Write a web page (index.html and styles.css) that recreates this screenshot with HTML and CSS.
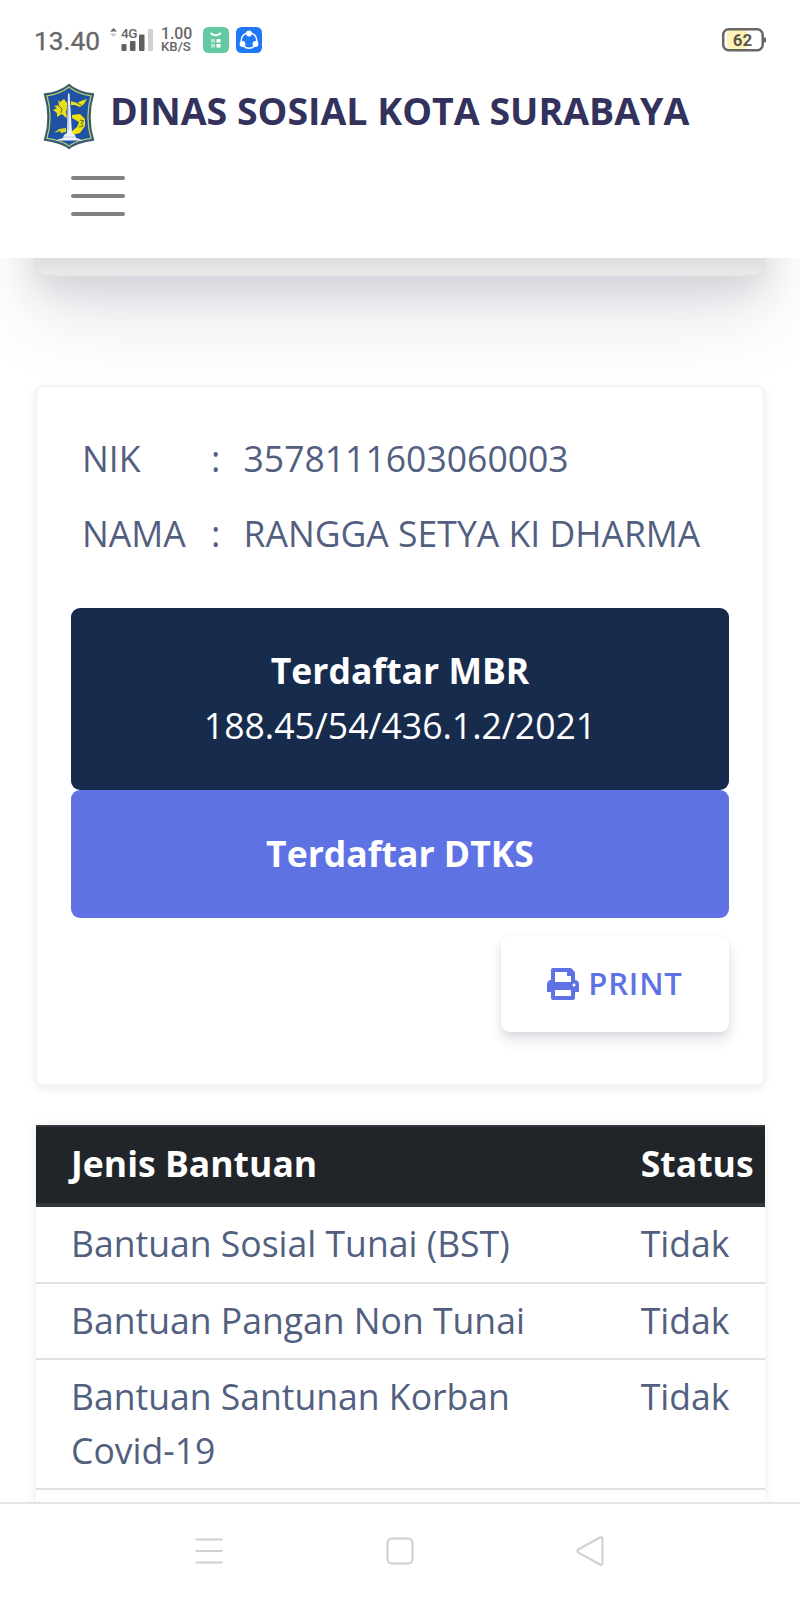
FILE: index.html
```html
<!DOCTYPE html>
<html lang="id">
<head>
<meta charset="utf-8">
<title>Dinas Sosial Kota Surabaya</title>
<link rel="stylesheet" href="styles.css">
</head>
<body>
<div class="screen">
  <header class="header">
    <div class="status-bar">
      <span class="clock">13.40</span>
      <svg class="signal" width="46" height="28" viewBox="0 0 46 28">
        <path d="M0 6.500L3.500 3L7 6.500Z" fill="#666"/><path d="M0 8.500L3.500 12L7 8.500Z" fill="#c8c8c8"/>
        <text x="11" y="12.500" class="net-label">4G</text>
        <rect x="11.500" y="19" width="5" height="7" rx="1" fill="#606060"/>
        <rect x="20" y="16" width="5.500" height="10" rx="1" fill="#606060"/>
        <rect x="29" y="9.500" width="5.500" height="16.500" rx="1" fill="#606060"/>
        <rect x="38" y="4" width="5" height="22" rx="1" fill="#d0d0d0"/>
      </svg>
      <span class="speed"><span class="speed-num">1.00</span><span class="speed-unit">KB/S</span></span>
      <svg class="app" width="26" height="26" viewBox="0 0 26 26">
        <rect width="26" height="26" rx="5.500" fill="#62c9a3"/>
        <path d="M7.500 6Q12.500 10.500 18 6" fill="none" stroke="#fff" stroke-width="2"/>
        <path d="M8 12h4v3.500H8zM8 17h4v3.500H8z" fill="#b9e7d6"/><path d="M13.500 12h4v3.500h-4zM13.500 17h4v3.500h-4z" fill="#fff"/>
      </svg>
      <svg class="app" width="26" height="26" viewBox="0 0 26 26">
        <rect width="26" height="26" rx="5.500" fill="#1f78f5"/>
        <circle cx="13" cy="13.500" r="7.800" fill="none" stroke="#fff" stroke-width="1.500"/>
        <circle cx="13" cy="6.500" r="2.900" fill="#fff"/><circle cx="6.500" cy="17" r="2.900" fill="#fff"/><circle cx="19.500" cy="17" r="2.900" fill="#fff"/>
      </svg>
      <svg class="battery" width="46" height="26" viewBox="0 0 46 26">
        <rect x="6" y="3" width="20" height="20" fill="#fff2b8"/>
        <rect x="2.200" y="2.200" width="39.500" height="21" rx="5.500" fill="none" stroke="#666" stroke-width="2.500"/>
        <rect x="42.500" y="10.500" width="2.500" height="5" rx="1" fill="#666"/>
        <text x="21.500" y="18.500" text-anchor="middle" class="battery-label">62</text>
      </svg>
    </div>
    <div class="brand">
      <svg class="crest" width="52" height="68" viewBox="0 0 52 68">
        <path d="M26 1.500C31 6 41 10 50.500 11C46 26 46 43 50.500 57C41 58.500 31 61 26 65.500C21 61 11 58.500 1.500 57C6 43 6 26 1.500 11C11 10 21 6 26 1.500Z" fill="#1f4da0" stroke="#426066" stroke-width="1.400"/>
        <path d="M26 4C31 8 39 11.500 48 12.800C44 27 44 42 48 55.300C39 56.500 31 59 26 63C21 59 13 56.500 4 55.300C8 42 8 27 4 12.800C13 11.500 21 8 26 4Z" fill="#1f51a5" stroke="#b9ce62" stroke-width="1.300"/>
        <path d="M24 20L21 16L17 19L15 17L16 22L11 23L14 25L10 27L14 30L14 34L19 31L22 34L24 35L23 29L24 25Z" fill="#e9df14"/>
        <path d="M28 18L34 20L38 18L44 16L41 21L37 24L32 22L28 22Z" fill="#e9df14"/>
        <path d="M29 32L37 31L42 36L42 43L37 50L29 52L29 48L34 44L36 39L29 35Z" fill="#f1e10b"/>
        <path d="M23 45L16 46L11 50L17 48L18 50L23 49Z" fill="#d8d91f"/>
        <path d="M37 37l4 1-3 2 2 3-4 1M15 22l4 4-1 4M34 20l4 2" fill="none" stroke="#344f38" stroke-width=".8"/>
        <path d="M25 10.500L26.500 10.500L29 50L32 52L33 55Q38 56 39 57.500H13Q15 56 20 55L21 52L24 50Z" fill="#eef3fb"/>
        <path d="M25.500 22v26M21 54h11" stroke="#aabbdd" stroke-width=".7"/>
      </svg>
      <h1 class="title">DINAS SOSIAL KOTA SURABAYA</h1>
    </div>
    <div class="burger"><span></span><span></span><span></span></div>
  </header>

  <main class="content">
    <div class="card-previous"></div>
    <section class="card-person">
      <dl class="facts">
        <dt>NIK</dt><dd>:</dd><dd>3578111603060003</dd>
        <dt>NAMA</dt><dd>:</dd><dd>RANGGA SETYA KI DHARMA</dd>
      </dl>
      <div class="banner banner-mbr"><b>Terdaftar MBR</b><span>188.45/54/436.1.2/2021</span></div>
      <div class="banner banner-dtks"><b>Terdaftar DTKS</b></div>
      <div class="print">
        <svg width="32" height="32" viewBox="0 0 512 512"><path fill="#5e72e4" d="M448 192V77.250c0-8.490-3.370-16.620-9.370-22.630L393.370 9.370c-6-6-14.140-9.370-22.630-9.370H96C78.330 0 64 14.330 64 32v160c-35.350 0-64 28.650-64 64v112c0 8.840 7.160 16 16 16h48v96c0 17.670 14.330 32 32 32h320c17.670 0 32-14.330 32-32v-96h48c8.840 0 16-7.160 16-16V256c0-35.350-28.650-64-64-64zm-64 256H128v-96h256v96zm0-224H128V64h192v48c0 8.840 7.160 16 16 16h48v96zm48 72c-13.250 0-24-10.750-24-24 0-13.260 10.750-24 24-24s24 10.740 24 24c0 13.250-10.750 24-24 24z"/></svg>
        <span>PRINT</span>
      </div>
    </section>
    <table class="aid">
      <thead><tr><th>Jenis Bantuan</th><th class="state">Status</th></tr></thead>
      <tbody>
        <tr><td>Bantuan Sosial Tunai (BST)</td><td class="state">Tidak</td></tr>
        <tr><td>Bantuan Pangan Non Tunai</td><td class="state">Tidak</td></tr>
        <tr><td>Bantuan Santunan Korban<br>Covid-19</td><td class="state">Tidak</td></tr>
        <tr><td>&nbsp;</td><td></td></tr>
      </tbody>
    </table>
  </main>

  <nav class="nav">
    <svg width="28" height="28" viewBox="0 0 28 28"><path d="M.5 2.500h27M.5 14h27M.5 25.500h27"/></svg>
    <svg width="28" height="28" viewBox="0 0 28 28"><rect x="1.500" y="1.500" width="25" height="25" rx="4.500"/></svg>
    <svg width="28" height="30" viewBox="0 0 28 30"><path d="M24 1.500L2 13.500Q.6 15 2 16.500L24 28.500Q26.500 29.500 26.500 27V3Q26.500 .5 24 1.500Z"/></svg>
  </nav>
</div>
</body>
</html>
```
FILE: styles.css
```css
* { box-sizing: border-box; }
body {
  margin: 0;
  background: #fff;
  color: #525f7f;
  font-family: "Open Sans", "Noto Sans", sans-serif;
  font-size: 35.56px;
  line-height: 53.33px;
}
.screen {
  display: flex;
  flex-direction: column;
  width: 800px;
  height: 1600px;
  overflow: hidden;
}

/* status bar and page header */
.header { flex: none; height: 258px; background: #fff; }
.status-bar {
  display: flex;
  align-items: center;
  height: 80px;
  padding: 0 33px 0 34px;
  color: #666;
  font-family: Roboto, sans-serif;
}
.clock { width: 76px; font-size: 26.300px; line-height: 32px; padding-top: 2px; -webkit-text-stroke: .3px #666; }
.signal { margin-bottom: 2px; }
.net-label { font: 500 13.500px Roboto, sans-serif; letter-spacing: -.5px; fill: #666; }
.speed { display: flex; flex-direction: column; width: 32px; margin: 0 10px 0 5px; font-weight: 500; white-space: nowrap; }
.speed-num { font-size: 15.800px; line-height: 13px; }
.speed-unit { font-size: 13.200px; line-height: 13px; }
.app { margin-right: 7px; }
.battery { margin-left: auto; }
.battery-label { font: 700 17px Roboto, sans-serif; fill: #5a5648; }
.brand { display: flex; height: 80px; padding-left: 43px; }
.crest { flex: none; margin-top: 2.500px; }
.title { margin: 4px 0 0 15px; color: #32325d; font-size: 37.500px; font-weight: 700; line-height: 54px; white-space: nowrap; }
.burger { display: flex; flex-direction: column; gap: 13.500px; padding: 16px 0 0 71px; }
.burger span { width: 53.500px; height: 4.400px; border-radius: 2.200px; background: #808080; }

/* scrolled page area: only the lower edge of the first card is visible */
.content { flex: 1; min-height: 0; overflow: hidden; padding: 0 35px; }
.card-previous {
  height: 400px;
  margin-top: -381px;
  border: 2px solid #e0e0e2;
  border-radius: 9px;
  background: linear-gradient(#dfdfe1 381px, #e9e9ea);
  box-shadow: 0 33px 78px rgba(50, 50, 93, .15), 0 11px 33px rgba(0, 0, 0, .1);
}
.card-person {
  height: 701px;
  margin-top: 108px;
  padding: 34px 34px 0;
  border: 2px solid #f4f4f5;
  border-radius: 9px;
  background: #fff;
  box-shadow: 0 3px 10px rgba(0, 0, 0, .08);
}
.facts {
  display: grid;
  grid-template-columns: 129px 32.500px 1fr;
  grid-auto-rows: 75px;
  align-items: center;
  margin: 0 0 37px;
  padding-left: 11px;
}
.facts dd { margin: 0; white-space: nowrap; }
.banner {
  display: flex;
  flex-direction: column;
  justify-content: center;
  align-items: center;
  border-radius: 9px;
  color: #fff;
}
.banner-mbr { height: 182px; padding-bottom: 2px; background: #172b4d; }
.banner-mbr span { padding-top: 1px; }
.banner-dtks { height: 128px; background: #5e72e4; }
.print {
  display: flex;
  align-items: center;
  justify-content: center;
  gap: 9px;
  width: 228px;
  height: 96px;
  margin: 18px 0 0 auto;
  border-radius: 9px;
  color: #5e72e4;
  font-size: 31.100px;
  font-weight: 600;
  letter-spacing: .8px;
  box-shadow: 0 9px 13px rgba(50, 50, 93, .11), 0 2px 7px rgba(0, 0, 0, .08);
}

/* assistance table */
.aid {
  width: 729px;
  margin-top: 39px;
  margin-left: .5px;
  border-spacing: 0;
  table-layout: fixed;
  box-shadow: 0 0 10px rgba(0, 0, 0, .08);
}
.aid th, .aid td { padding: 10px 0 11.400px 35.500px; text-align: left; vertical-align: top; }
.aid th { background: #212529; color: #fff; height: 82px; border-top: 2px solid #32383e; border-bottom: 4px solid #32383e; }
.aid td { border-bottom: 2px solid #dee2e6; white-space: nowrap; }
.aid .state { width: 134.500px; padding-left: 10.700px; }

/* device navigation */
.nav {
  flex: none;
  display: flex;
  justify-content: space-between;
  align-items: center;
  height: 98px;
  padding: 0 196px 2px 195px;
  border-top: 2px solid #e3e5e5;
  background: #fff;
}
.nav svg { fill: none; stroke: #d0d0d0; stroke-width: 2; }
```
